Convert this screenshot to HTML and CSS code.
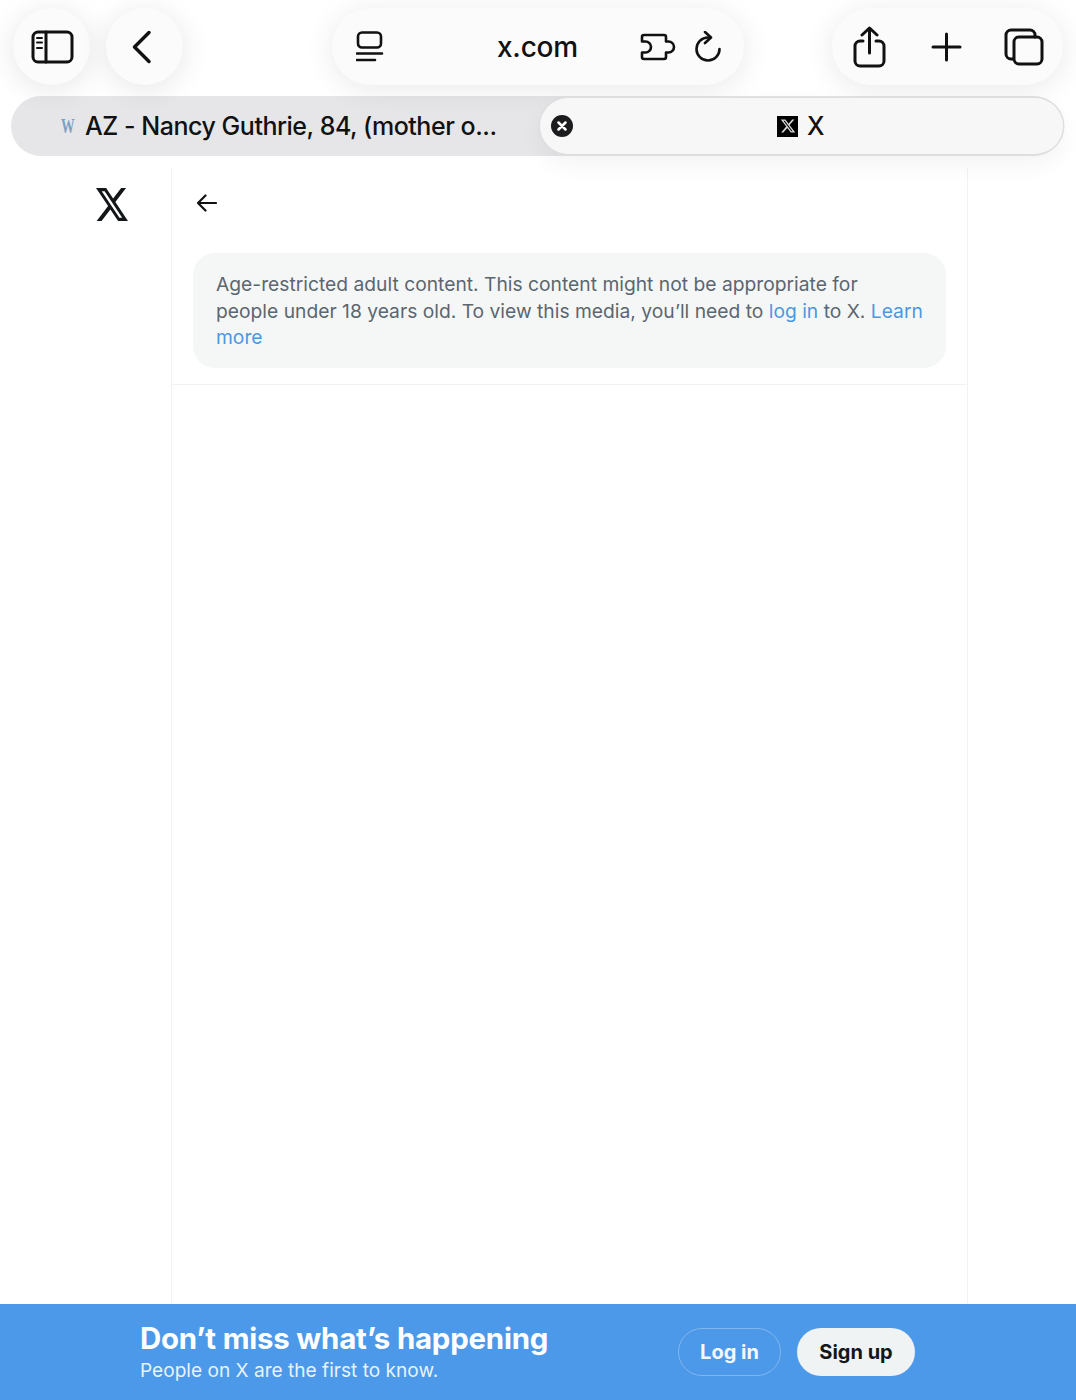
FILE: index.html
```html
<!DOCTYPE html>
<html lang="en">
<head>
<meta charset="utf-8">
<title>X</title>
<link rel="stylesheet" href="styles.css">
</head>
<body>
<div class="page">
  <header class="chrome">
    <div class="toolbar">
      <div class="group-left">
        <button class="circle">
          <svg class="icon sidebar-icon" width="44" height="34" viewBox="0 0 44 34"><rect x="2" y="2" width="39" height="30" rx="5" class="st"/><path d="M15 2v30" class="st"/><path d="M6 8h5M6 12.500h5M6 18h5" class="st thin"/></svg>
        </button>
        <button class="circle">
          <svg class="icon chevron" width="22" height="34" viewBox="0 0 22 34"><path d="M18 2.500 3.500 17 18 31.500" class="st wide"/></svg>
        </button>
      </div>
      <div class="address">
        <svg class="icon addr-left" width="28" height="32" viewBox="0 0 28 32"><rect x="2" y="1.500" width="23" height="15" rx="4" class="st2"/><path d="M1 22.500h25M1 29h18" class="st2"/></svg>
        <span class="url">x.com</span>
        <svg class="icon puzzle" width="36" height="28" viewBox="0 0 36 28"><path d="M2 4a2 2 0 0 1 2-2h20a2 2 0 0 1 2 2v4.500h2.500a5.500 5.500 0 0 1 0 11H26V24a2 2 0 0 1-2 2H4a2 2 0 0 1-2-2v-4.500h3.500a5.500 5.500 0 0 0 0-11H2z" class="st2"/></svg>
        <svg class="icon reload" width="28" height="32" viewBox="0 0 28 32"><path d="M14 6.500a11.500 11.500 0 1 0 11.500 11.500" class="st2"/><path d="M11 1l6 5.500-6 5.500" class="st2"/></svg>
      </div>
      <div class="actions">
        <svg class="icon" width="34" height="42" viewBox="0 0 34 42"><path d="M10 15H7a5 5 0 0 0-5 5v15a5 5 0 0 0 5 5h19a5 5 0 0 0 5-5V20a5 5 0 0 0-5-5h-3" class="st"/><path d="M16.500 27V3M9 9l7.500-7L24 9" class="st"/></svg>
        <svg class="icon" width="32" height="30" viewBox="0 0 32 30"><path d="M3 15h27M16.500 2v26" class="st"/></svg>
        <svg class="icon" width="40" height="38" viewBox="0 0 40 38"><path d="M9 31H7a5 5 0 0 1-5-5V7a5 5 0 0 1 5-5h19a5 5 0 0 1 5 5v2" class="st"/><rect x="10" y="9" width="28" height="27" rx="5" class="st"/></svg>
      </div>
    </div>
    <div class="tabs">
      <div class="tab tab-back">
        <span class="wiki">W</span>
        <span class="tab-title title-long">AZ - Nancy Guthrie, 84, (mother o...</span>
      </div>
      <div class="tab tab-active">
        <span class="close"><svg width="10" height="10" viewBox="0 0 10 10"><path d="M1.500 1.500l7 7M8.500 1.500l-7 7" class="close-x"/></svg></span>
        <span class="active-label">
          <span class="favicon"><svg width="16" height="16" viewBox="0 0 24 24"><path d="M18.244 2.250h3.308l-7.227 8.260 8.502 11.240H16.170l-5.214-6.817L4.990 21.750H1.680l7.730-8.835L1.254 2.250H8.080l4.713 6.231zm-1.161 17.520h1.833L7.084 4.126H5.117z" class="fav-x"/></svg></span>
          <span class="tab-title">X</span>
        </span>
      </div>
    </div>
  </header>

  <main class="main">
    <aside class="rail">
      <svg class="logo" width="32" height="33" viewBox="1.250 2.250 21.600 19.500" preserveAspectRatio="none"><path d="M18.244 2.250h3.308l-7.227 8.260 8.502 11.240H16.170l-5.214-6.817L4.990 21.750H1.680l7.730-8.835L1.254 2.250H8.080l4.713 6.231zm-1.161 17.520h1.833L7.084 4.126H5.117z" class="logo-x"/></svg>
    </aside>
    <section class="column">
      <div class="column-head">
        <svg class="back" width="22" height="20" viewBox="0 0 22 20"><path d="M21 10H3M10.500 2.500 3 10l7.500 7.500" class="back-st"/></svg>
        <div class="notice">Age-restricted adult content. This content might not be appropriate for people under 18 years old. To view this media, you’ll need to <a class="link">log in</a> to X. <a class="link">Learn more</a></div>
      </div>
    </section>
    <div class="rail-right"></div>
  </main>

  <footer class="banner">
    <div class="banner-text">
      <div class="banner-title">Don’t miss what’s happening</div>
      <div class="banner-sub">People on X are the first to know.</div>
    </div>
    <div class="banner-actions">
      <a class="btn btn-login">Log in</a>
      <a class="btn btn-signup">Sign up</a>
    </div>
  </footer>
</div>
</body>
</html>
```

FILE: styles.css
```css
* { box-sizing: border-box; }
html, body { margin: 0; padding: 0; background: #fff; }
body { font-family: Inter, "Liberation Sans", sans-serif; color: #0f1419; }
.page { width: 1076px; height: 1400px; display: flex; flex-direction: column; overflow: hidden; }

.chrome { height: 168px; padding: 8px 13px 0 11px; flex: none; }
.toolbar { display: flex; align-items: center; height: 77px; padding-left: 2px; padding-right: 1px; }
.group-left { display: flex; gap: 16px; width: 319px; flex: none; }
.circle {
  width: 77px; height: 77px; border: 0; border-radius: 50%; padding: 0;
  display: flex; align-items: center; justify-content: center;
  background: #fbfbfb; box-shadow: 0 4px 30px rgba(0, 0, 0, .1);
}
.icon { display: block; flex: none; }
.sidebar-icon { margin-left: 2px; }
.chevron { margin-right: 5px; }
.st { fill: none; stroke: #111; stroke-width: 3; stroke-linecap: round; stroke-linejoin: round; }
.st2 { fill: none; stroke: #111; stroke-width: 2.600; stroke-linecap: round; stroke-linejoin: round; }
.thin { stroke-width: 2; }
.wide { stroke-width: 3.500; }
.address {
  width: 412px; height: 77px; border-radius: 39px; flex: none;
  display: flex; align-items: center; padding: 0 21px 0 24px;
  background: #fbfbfb; box-shadow: 0 4px 30px rgba(0, 0, 0, .09);
}
.url { flex: 1; text-align: center; font-size: 28px; font-weight: 500; letter-spacing: -.2px; color: #111; padding-left: 51px; }
.puzzle { margin-right: 18px; }
.reload { margin-right: 1px; }
.actions {
  margin-left: 88px; width: 231px; height: 77px; border-radius: 39px; flex: none;
  display: flex; align-items: center; justify-content: space-between; padding: 0 19px 0 21px;
  background: #fbfbfb; box-shadow: 0 4px 30px rgba(0, 0, 0, .09);
}

.tabs {
  display: flex; height: 60px; margin-top: 11px; width: 1052px; border-radius: 30px;
  background: #e6e6e9;
}
.tab { display: flex; align-items: center; height: 60px; }
.tab-back { width: 529px; padding-left: 50px; gap: 9px; }
.tab-title { font-size: 25px; font-weight: 500; color: #111; white-space: nowrap; letter-spacing: -.15px; }
.title-long { letter-spacing: -.47px; }
.wiki {
  display: inline-block; width: 15px; font-family: "Liberation Serif", serif; font-size: 22px; line-height: 22px;
  color: #7c9fc0; font-weight: 700; transform: scaleX(.62); transform-origin: left center;
}
.tab-active {
  position: relative; width: 523px; height: 56px; margin-top: 2px; border-radius: 28px;
  background: #f7f7f8; box-shadow: 0 0 0 1.500px #dedee0, 0 10px 24px rgba(0, 0, 0, .05);
  padding-left: 11px;
}
.close { width: 22px; height: 22px; border-radius: 50%; background: #1c1c1e; display: flex; align-items: center; justify-content: center; flex: none; }
.close-x { stroke: #fff; stroke-width: 2.500; stroke-linecap: round; fill: none; }
.active-label { display: flex; align-items: center; gap: 9px; margin-left: 204px; }
.favicon { width: 21px; height: 21px; background: #000; display: flex; align-items: center; justify-content: center; }
.fav-x { fill: #d8d8d8; }

.main { flex: 1; display: flex; min-height: 0; }
.rail { width: 171px; flex: none; display: flex; justify-content: flex-end; align-items: flex-start; padding: 20px 43px 0 0; }
.logo { display: block; }
.logo-x { fill: #14171a; }
.column { width: 797px; flex: none; border-left: 1px solid #eff3f4; border-right: 1px solid #eff3f4; }
.column-head { border-bottom: 1px solid #eff3f4; height: 217px; padding: 25px 21px 0; }
.back { display: block; margin-left: 2px; }
.back-st { fill: none; stroke: #111; stroke-width: 2.200; stroke-linecap: round; stroke-linejoin: round; }
.notice {
  margin-top: 40px; height: 115px; border-radius: 22px; background: #f5f7f7;
  padding: 18px 22px 0 23px; font-size: 19.250px; line-height: 26.500px; color: #5b6670;
}
.link { color: #4c98e0; }
.rail-right { flex: 1; }

.banner {
  height: 96px; flex: none; background: #4c99e9; display: flex; align-items: center;
  padding: 0 161px 0 140px; justify-content: space-between;
}
.banner-text { margin-top: 2px; }
.banner-title { font-size: 29.400px; line-height: 34px; font-weight: 700; color: #fff; letter-spacing: -.2px; }
.banner-sub { font-size: 19.100px; line-height: 28px; color: #e8f2fb; }
.banner-actions { display: flex; gap: 16px; }
.btn { display: flex; align-items: center; justify-content: center; height: 48px; border-radius: 24px; font-size: 20px; font-weight: 700; }
.btn-login { width: 103px; border: 1px solid #80b7ef; color: #f4f8fc; }
.btn-signup { width: 118px; background: #eff3f4; color: #14171a; }
```
